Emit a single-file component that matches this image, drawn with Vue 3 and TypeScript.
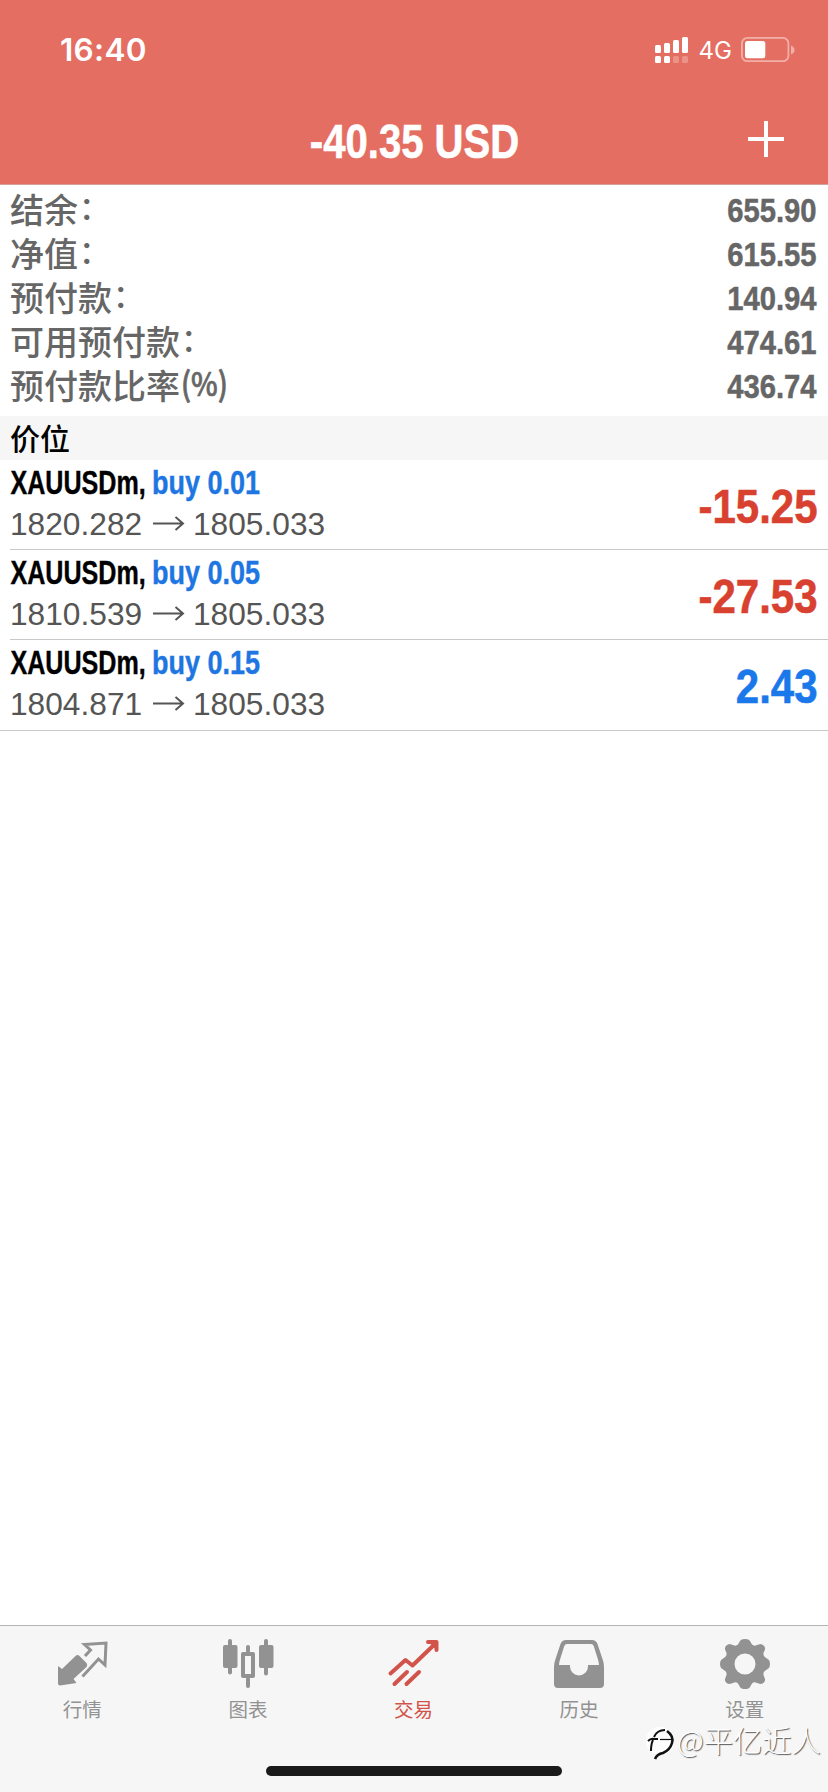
<script setup lang="ts">
interface SummaryRow { text: string; mark: string; suffix?: string; value: string }
interface Position { lots: string; open: string; close: string; profit: string; gain: boolean }

const summary: SummaryRow[] = [
  { text: '结余', mark: '：', value: '655.90' },
  { text: '净值', mark: '：', value: '615.55' },
  { text: '预付款', mark: '：', value: '140.94' },
  { text: '可用预付款', mark: '：', value: '474.61' },
  { text: '预付款比率', mark: '', suffix: '(%)', value: '436.74' },
]

const positions: Position[] = [
  { lots: 'buy 0.01', open: '1820.282', close: '1805.033', profit: '-15.25', gain: false },
  { lots: 'buy 0.05', open: '1810.539', close: '1805.033', profit: '-27.53', gain: false },
  { lots: 'buy 0.15', open: '1804.871', close: '1805.033', profit: '2.43', gain: true },
]

const tabs = [
  { id: 'quotes', label: '行情' },
  { id: 'charts', label: '图表' },
  { id: 'trade', label: '交易' },
  { id: 'history', label: '历史' },
  { id: 'settings', label: '设置' },
]
</script>

<template>
  <div class="screen">
    <header class="header">
      <div class="status">
        <span class="time">16:40</span>
        <svg class="indicators" width="144" height="34" viewBox="652 33 144 34">
          <g fill="#fff">
            <rect x="655" y="45" width="6" height="8" rx="1.5" />
            <rect x="664" y="43" width="6" height="10" rx="1.5" />
            <rect x="673" y="40" width="6" height="13" rx="1.5" />
            <rect x="682" y="37" width="6" height="16" rx="1.5" />
            <rect x="655" y="56" width="6" height="7" rx="1.5" />
            <rect x="664" y="56" width="6" height="7" rx="1.5" />
            <rect x="673" y="56" width="6" height="7" rx="1.5" opacity=".25" />
            <rect x="682" y="56" width="6" height="7" rx="1.5" opacity=".25" />
            <text x="698.5" y="59.3" font-size="24" class="net">4G</text>
            <rect x="745" y="41" width="20.3" height="17.3" rx="2.5" />
            <path d="M791 45.5q3.500 1.500 3.500 4.500t-3.500 4.500z" opacity=".45" />
          </g>
          <rect x="741.9" y="37.9" width="46.5" height="23.3" rx="5.5" fill="none" stroke="#fff" stroke-width="1.8" opacity=".45" />
        </svg>
      </div>
      <div class="title">
        <svg width="212" height="50" class="cond heading"><text transform="translate(106.500 41) scale(.835 1)" text-anchor="middle">-40.35 USD</text></svg>
        <svg class="plus" width="36" height="36" viewBox="0 0 36 36"><path d="M18 0v36M0 18h36" stroke="#fff" stroke-width="4" /></svg>
      </div>
    </header>

    <section class="summary">
      <div v-for="s in summary" :key="s.text" class="sum-row">
        <span class="sum-label">{{ s.text }}</span>
        <span v-if="s.mark" class="mark">{{ s.mark }}</span>
        <svg v-if="s.suffix" class="suffix" width="48" height="44"><text transform="translate(1 34) scale(.86 1)">{{ s.suffix }}</text></svg>
        <svg class="cond value" width="100" height="44"><text transform="translate(98.500 36) scale(.86 1)" text-anchor="end">{{ s.value }}</text></svg>
      </div>
    </section>

    <div class="section-title">价位</div>

    <section class="positions">
      <div v-for="p in positions" :key="p.lots" class="position">
        <svg class="details" width="340" height="89">
          <g class="cond deal">
            <text transform="translate(.500 34) scale(.772 1)">XAUUSDm,</text>
            <text class="side" transform="translate(142 34) scale(.83 1)">{{ p.lots }}</text>
          </g>
          <g class="quote">
            <text x="0" y="75">{{ p.open }}</text>
            <path d="M143 63.500h29M165.500 57l7.500 6.500l-7.500 6.500" />
            <text x="183" y="75">{{ p.close }}</text>
          </g>
        </svg>
        <svg class="cond profit" :class="{ gain: p.gain }" width="150" height="89"><text transform="translate(149.500 63) scale(.875 1)" text-anchor="end">{{ p.profit }}</text></svg>
      </div>
    </section>

    <nav class="tabs">
      <div v-for="t in tabs" :key="t.id" class="tab" :class="{ active: t.id === 'trade' }">
        <svg v-if="t.id === 'quotes'" width="52" height="52" viewBox="56 1638 52 52">
          <path fill="currentColor" d="M57 1666l4 3l13.500-13q2-1.800 4 0l7 7q1.500 2 0 4l-13 12l3 4l-16.500 2.500q-2 0-2-2z" />
          <path fill="none" stroke="currentColor" stroke-width="3" d="M84 1656l5.500-6l-6-5.500l21.500-1.500l-1 22l-6.500-6l-16 17.500" />
        </svg>
        <svg v-else-if="t.id === 'charts'" width="52" height="52" viewBox="222 1638 52 52">
          <g fill="currentColor">
            <rect x="223" y="1645" width="14.500" height="23" rx="2" /><rect x="228" y="1639" width="4" height="35.500" rx="2" />
            <rect x="259" y="1645" width="14.500" height="23" rx="2" /><rect x="264" y="1639" width="4" height="36.500" rx="2" />
            <rect x="246" y="1645" width="4" height="8" rx="2" /><rect x="246" y="1677" width="4" height="11" rx="2" />
            <path fill-rule="evenodd" d="M243 1652h10q2 0 2 2v22q0 2-2 2h-10q-2 0-2-2v-22q0-2 2-2zm2 4v18h6v-18z" />
          </g>
        </svg>
        <svg v-else-if="t.id === 'trade'" width="52" height="52" viewBox="387.500 1638 52 52">
          <path fill="none" stroke="currentColor" stroke-width="4" stroke-linecap="round" stroke-linejoin="round" d="M390 1673.500l15-13.500l7 5.500l24-23M427.500 1642h8.500v8M394 1684l12.500-12M406 1684l12.500-12" />
          <path fill="currentColor" d="M427 1641h9v9z" />
        </svg>
        <svg v-else-if="t.id === 'history'" width="52" height="52" viewBox="553 1638 52 52">
          <path fill="currentColor" fill-rule="evenodd" d="M565 1640h26q4 0 5.500 4l5 15q1.500 4 1.500 8v17q0 4-4 4h-42q-4 0-4-4v-17q0-4 1.500-8l5-15q1.500-4 5.500-4zm1 4q-2 0-2.700 2l-4.300 13.500q-.8 2.500-1 5.500h11v1.500a9 9 0 0 0 18 0v-1.500h11q-.2-3-1-5.500l-4.300-13.500q-.7-2-2.700-2z" />
        </svg>
        <svg v-else width="52" height="52" viewBox="-26 -26 52 52">
          <path fill="currentColor" fill-rule="evenodd" d="M-5-23Q-4-25 0-25T5-23L7-19.500Q9-17.500 12-19L15.500-20Q20.500-19 20-14.500L18.500-11Q18-7.500 20.500-6.500L24-4Q26 0 24 4L20.500 6.500Q18 7.500 18.500 11L20 15Q20.500 19 15.500 20L12 19Q9 17.500 7 19.500L5 23Q4 25 0 25T-5 23L-7 19.500Q-9 17.500-12 19L-15.500 20Q-20.500 19-20 15L-18.500 11Q-18 7.500-20.500 6.500L-24 4Q-26 0-24-4L-20.500-6.500Q-18-7.500-18.500-11L-20-14.500Q-20.500-19-15.500-20L-12-19Q-9-17.500-7-19.500ZM10.500 0A10.500 10.500 0 1 0-10.500 0A10.500 10.500 0 1 0 10.500 0Z" />
        </svg>
        <span>{{ t.label }}</span>
      </div>
      <div class="home-bar"></div>
      <div class="watermark">
        <svg width="32" height="36" viewBox="0 0 32 36">
          <circle cx="15" cy="16" r="14" fill="#fff" />
          <path fill="none" stroke="#111" stroke-width="2" d="M3 16Q6 13 9 14H13M8 15Q6 19 6 26M9 12Q12 5 20 5" />
          <path fill="none" stroke="#111" stroke-width="1.2" d="M15 14.500h12" />
          <path fill="none" stroke="#111" stroke-width="2.600" d="M22 6Q29 11 27 18T18 28Q12 29 10 34" />
        </svg>
        <span>@平亿近人</span>
      </div>
    </nav>
  </div>
</template>

<style>
body { margin: 0; background: #fff; }
</style>
<style scoped>
.screen { width: 828px; height: 1792px; display: flex; flex-direction: column; background: #fff; overflow: hidden; font-family: "Liberation Sans", "Noto Sans CJK SC", sans-serif; }
svg { display: block; flex: none; overflow: visible; }
.cond { font-family: "Liberation Sans", sans-serif; font-weight: 700; }
.header { height: 184px; flex: none; background: #e56e62; border-bottom: 1px solid #d3a29c; box-sizing: content-box; }
.status { display: flex; justify-content: space-between; padding: 33px 32px 0 60px; height: 67px; box-sizing: border-box; }
.time { font: 600 31.5px/34px Inter, sans-serif; color: #fff; letter-spacing: .3px; }
.net { font-family: Inter, sans-serif; font-weight: 400; }
.title { position: relative; height: 117px; display: flex; justify-content: center; padding-top: 50px; box-sizing: border-box; }
.heading { font-size: 48px; fill: #fff; stroke: #fff; stroke-width: .6px; }
.plus { position: absolute; right: 44px; top: 54px; }
.summary { height: 231px; flex: none; padding: 1px 10px 0; box-sizing: border-box; color: #666; }
.sum-row { height: 44px; display: flex; fill: #666; }
.sum-label { font: 500 34px/46px "Noto Sans CJK SC", sans-serif; }
.mark { margin-left: 1px; font: 500 31px/39px "Noto Sans CJK SC", sans-serif; }
.suffix { font: 500 33px "Noto Sans CJK SC", sans-serif; stroke: #666; stroke-width: .7px; }
.value { margin-left: auto; font-size: 34px; stroke: #666; stroke-width: .5px; }
.section-title { height: 44px; flex: none; background: #f6f6f6; padding-left: 10px; font: 500 30px/42px "Noto Sans CJK SC", sans-serif; color: #000; }
.positions { border-bottom: 1px solid #c8c8c8; }
.position { height: 89px; margin-left: 10px; padding-right: 10px; display: flex; justify-content: space-between; border-bottom: 1px solid #c8c8c8; }
.position:last-child { border-bottom: 0; height: 90px; }
.deal { font-size: 32.5px; stroke: #000; stroke-width: .4px; }
.side { fill: #1e76e2; stroke: #1e76e2; }
.quote { font-size: 31.7px; fill: #555; }
.quote path { fill: none; stroke: #555; stroke-width: 2; }
.profit { font-size: 48px; fill: #d8402f; stroke: #d8402f; stroke-width: .6px; }
.profit.gain { fill: #1a78ea; stroke: #1a78ea; }
.tabs { position: relative; display: flex; margin-top: auto; height: 167px; box-sizing: border-box; border-top: 1px solid #b4b4b4; background: #f6f6f6; }
.tab { flex: 1; display: flex; flex-direction: column; align-items: center; padding-top: 12px; color: #929292; }
.tab span { margin: 4px 1px 0 0; font: 400 19.5px/29px "Noto Sans CJK SC", sans-serif; }
.tab.active { color: #d15349; }
.home-bar { position: absolute; left: 266px; top: 140px; width: 296px; height: 10px; border-radius: 5px; background: #1a1a1a; }
.watermark { position: absolute; left: 645px; top: 99px; display: flex; align-items: flex-start; color: #fff; }
.watermark span { margin-top: -4px; font: 300 29.3px/36px "Noto Sans CJK SC", sans-serif; text-shadow: 1px 1px 1px #555; white-space: nowrap; }
</style>
